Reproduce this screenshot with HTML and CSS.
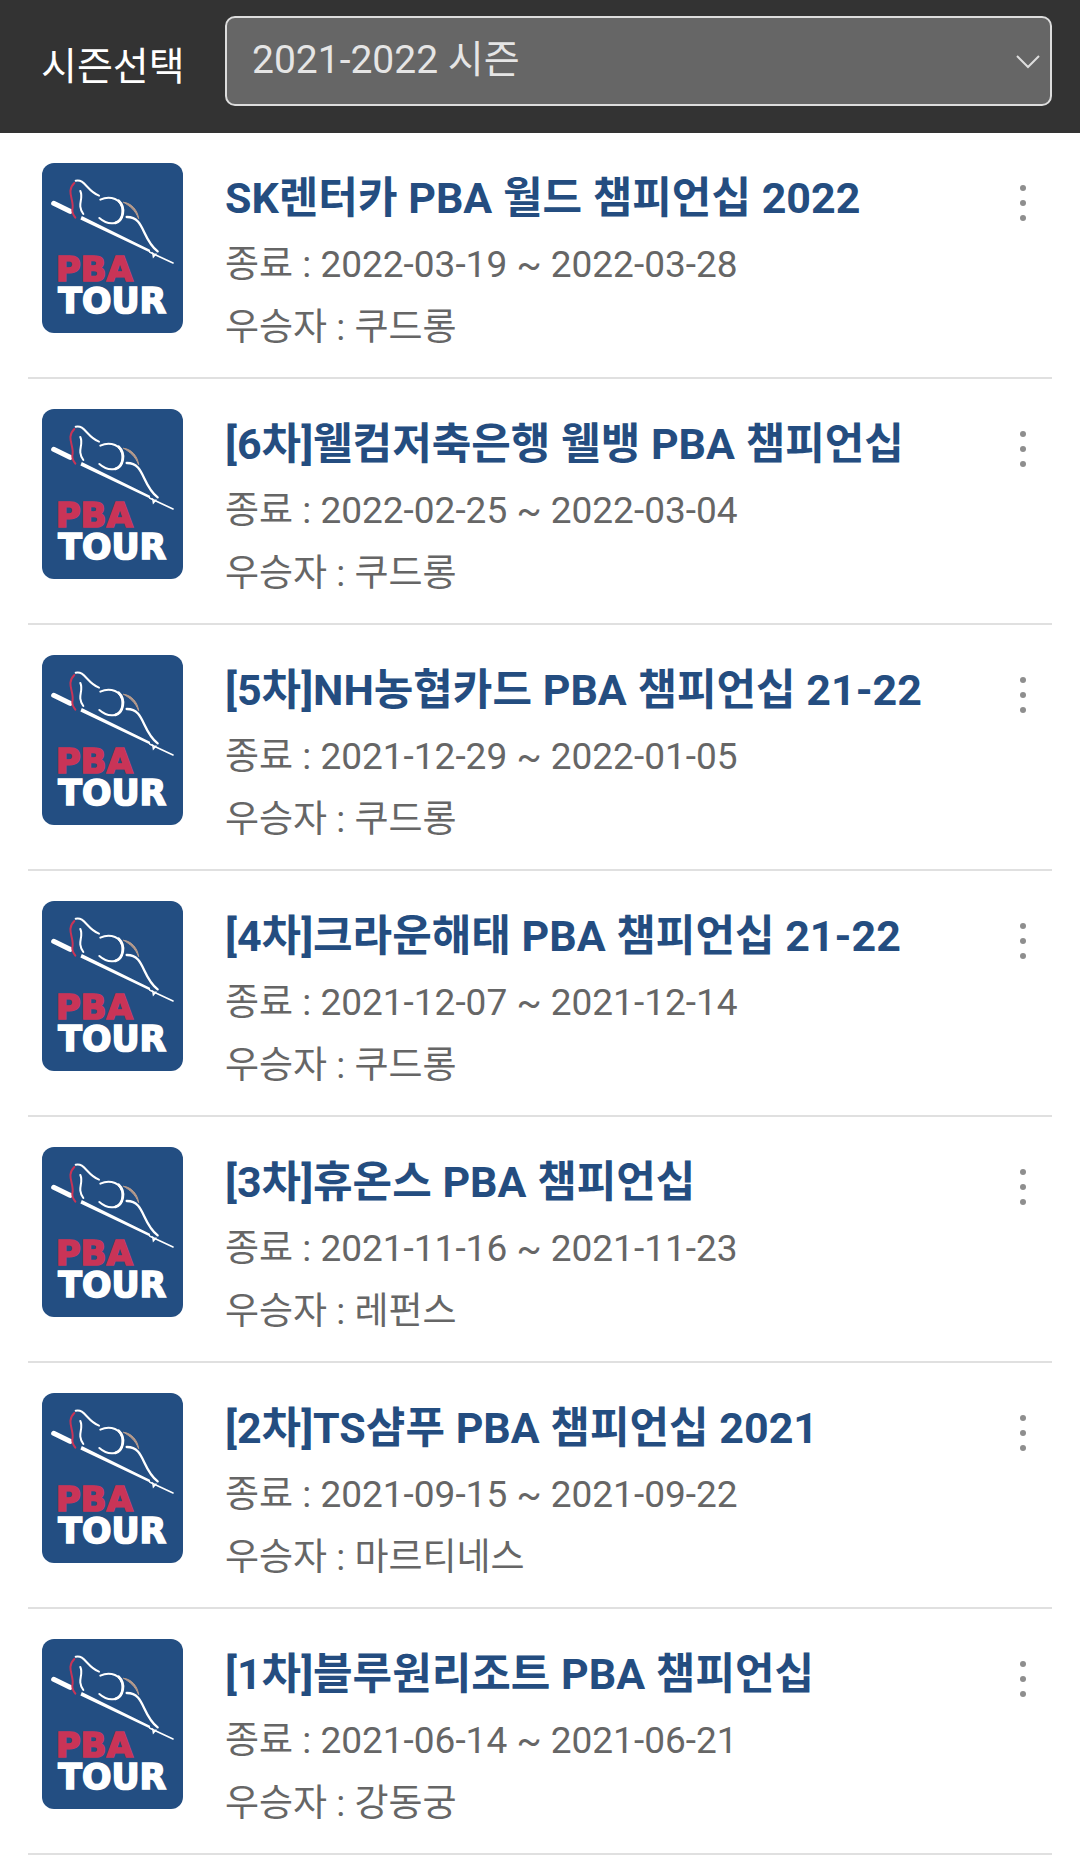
FILE: index.html
```
<!DOCTYPE html>
<html lang="ko">
<head>
  <meta charset="UTF-8">
  <meta name="viewport" content="width=device-width, initial-scale=1.0">
  <title>PBA TOUR 시즌선택</title>
  <link rel="stylesheet" href="styles.css">
</head>
<body>
  <!-- shared logo -->
  <svg class="defs" aria-hidden="true">
    <symbol id="pba-logo" viewBox="37 38 423 510">
      <g fill="none" stroke="#fff" stroke-linecap="round">
        <path d="M72 159 L121 183" stroke-width="15"/>
        <path d="M158 201 L358 300 L358 302 L156 206 Z" fill="#fff" stroke-width="6"/>
        <path d="M138 91 C165 84 172 123 208 136" stroke-width="6"/>
        <path d="M152 122 C163 146 140 162 161 191" stroke-width="6"/>
        <path d="M212 148 C239 135 280 144 279 184 C278 223 239 229 209 203" stroke-width="6"/>
        <path d="M267 151 C289 172 281 210 257 218" stroke-width="8"/>
        <path d="M291 200 C346 199 335 266 384 303" stroke-width="7"/>
        <path d="M361 306 L430 338" stroke-width="5"/>
        <path d="M369 308 L371 320 L379 311" stroke-width="4"/>
        <path d="M134 98 C107 124 136 151 128 177 C127 187 131 194 137 202" stroke="#c93457" stroke-width="6"/>
        <path d="M282 156 C304 158 323 177 327 205 C317 180 302 168 282 156 Z" fill="#b69b8c" stroke="#b69b8c" stroke-width="3"/>
      </g>
      <text class="logo-pba" x="78" y="393">PBA</text>
      <text class="logo-tour" x="86" y="488">TOUR</text>
    </symbol>
    <symbol id="dots" viewBox="0 0 8 36">
      <circle cx="4" cy="3" r="3"/>
      <circle cx="4" cy="18" r="3"/>
      <circle cx="4" cy="33" r="3"/>
    </symbol>
  </svg>

  <header class="header">
    <label for="season">시즌선택</label>
    <div class="select-wrap">
      <select id="season">
        <option>2021-2022 시즌</option>
      </select>
      <svg class="arrow" viewBox="0 0 24 14" aria-hidden="true"><path d="M1 1 L12 12 L23 1"/></svg>
    </div>
  </header>

  <main>
    <ul class="tour-list">
      <li class="tour">
        <svg class="logo" role="img" aria-label="PBA TOUR"><use href="#pba-logo"/></svg>
        <div class="info">
          <h2><a href="#">SK렌터카 PBA 월드 챔피언십 2022</a></h2>
          <p>종료 : 2022-03-19 ~ 2022-03-28</p>
          <p>우승자 : 쿠드롱</p>
        </div>
        <button class="more" type="button" aria-label="더보기"><svg><use href="#dots"/></svg></button>
      </li>
      <li class="tour">
        <svg class="logo" role="img" aria-label="PBA TOUR"><use href="#pba-logo"/></svg>
        <div class="info">
          <h2><a href="#">[6차]웰컴저축은행 웰뱅 PBA 챔피언십</a></h2>
          <p>종료 : 2022-02-25 ~ 2022-03-04</p>
          <p>우승자 : 쿠드롱</p>
        </div>
        <button class="more" type="button" aria-label="더보기"><svg><use href="#dots"/></svg></button>
      </li>
      <li class="tour">
        <svg class="logo" role="img" aria-label="PBA TOUR"><use href="#pba-logo"/></svg>
        <div class="info">
          <h2><a href="#">[5차]NH농협카드 PBA 챔피언십 21-22</a></h2>
          <p>종료 : 2021-12-29 ~ 2022-01-05</p>
          <p>우승자 : 쿠드롱</p>
        </div>
        <button class="more" type="button" aria-label="더보기"><svg><use href="#dots"/></svg></button>
      </li>
      <li class="tour">
        <svg class="logo" role="img" aria-label="PBA TOUR"><use href="#pba-logo"/></svg>
        <div class="info">
          <h2><a href="#">[4차]크라운해태 PBA 챔피언십 21-22</a></h2>
          <p>종료 : 2021-12-07 ~ 2021-12-14</p>
          <p>우승자 : 쿠드롱</p>
        </div>
        <button class="more" type="button" aria-label="더보기"><svg><use href="#dots"/></svg></button>
      </li>
      <li class="tour">
        <svg class="logo" role="img" aria-label="PBA TOUR"><use href="#pba-logo"/></svg>
        <div class="info">
          <h2><a href="#">[3차]휴온스 PBA 챔피언십</a></h2>
          <p>종료 : 2021-11-16 ~ 2021-11-23</p>
          <p>우승자 : 레펀스</p>
        </div>
        <button class="more" type="button" aria-label="더보기"><svg><use href="#dots"/></svg></button>
      </li>
      <li class="tour">
        <svg class="logo" role="img" aria-label="PBA TOUR"><use href="#pba-logo"/></svg>
        <div class="info">
          <h2><a href="#">[2차]TS샴푸 PBA 챔피언십 2021</a></h2>
          <p>종료 : 2021-09-15 ~ 2021-09-22</p>
          <p>우승자 : 마르티네스</p>
        </div>
        <button class="more" type="button" aria-label="더보기"><svg><use href="#dots"/></svg></button>
      </li>
      <li class="tour">
        <svg class="logo" role="img" aria-label="PBA TOUR"><use href="#pba-logo"/></svg>
        <div class="info">
          <h2><a href="#">[1차]블루원리조트 PBA 챔피언십</a></h2>
          <p>종료 : 2021-06-14 ~ 2021-06-21</p>
          <p>우승자 : 강동궁</p>
        </div>
        <button class="more" type="button" aria-label="더보기"><svg><use href="#dots"/></svg></button>
      </li>
    </ul>
  </main>
</body>
</html>
```
FILE: styles.css
```
* {
  box-sizing: border-box;
}

body {
  font-family: Roboto, "Noto Sans CJK KR", sans-serif;
  font-size: 37px;
  margin: 0;
  background-color: #fff;
  color: #666;
}

.defs {
  display: none;
}

.header {
  display: grid;
  grid-template-columns: 184px 1fr;
  align-items: center;
  padding: 16px 28px 27px 41px;
  background-color: #333;
  font-size: 39px;
}

.header label {
  padding-top: 4px;
  color: #fff;
}

.select-wrap {
  position: relative;
}

.select-wrap select {
  appearance: none;
  display: block;
  width: 100%;
  height: 90px;
  padding: 0 48px 2px 25px;
  border: 2px solid #ddd;
  border-radius: 10px;
  background-color: #666;
  color: #e5e5e5;
  font: inherit;
}

.arrow {
  position: absolute;
  top: 39px;
  right: 12px;
  width: 24px;
  height: 14px;
  fill: none;
  stroke: #ddd;
  stroke-width: 2;
  pointer-events: none;
}

.tour-list {
  list-style: none;
  margin: 0 28px;
  padding: 0;
}

.tour {
  display: flex;
  align-items: flex-start;
  padding: 30px 14px 18px;
  border-bottom: 2px solid #e0e0e0;
}

.logo {
  flex: none;
  width: 141px;
  height: 170px;
  margin-right: 42px;
  border-radius: 12px;
  background-color: #234e82;
}

.logo-pba,
.logo-tour {
  font-family: "DejaVu Sans", sans-serif;
  font-weight: bold;
  stroke-width: 5px;
}

.logo-pba {
  font-size: 102px;
  fill: #c93457;
  stroke: #c93457;
}

.logo-tour {
  font-size: 104px;
  fill: #fff;
  stroke: #fff;
}

.info {
  flex: 1;
}

.info h2 {
  margin: 0;
  font-size: 43px;
  line-height: 70px;
}

.info a {
  color: #244d80;
  text-decoration: none;
}

.info p {
  margin: 0;
  line-height: 63px;
}

.more {
  flex: none;
  width: 30px;
  height: 80px;
  padding: 0;
  border: none;
  background: none;
  cursor: pointer;
}

.more svg {
  display: block;
  width: 8px;
  height: 36px;
  margin: 0 auto;
  fill: #8e8e8e;
}
```
